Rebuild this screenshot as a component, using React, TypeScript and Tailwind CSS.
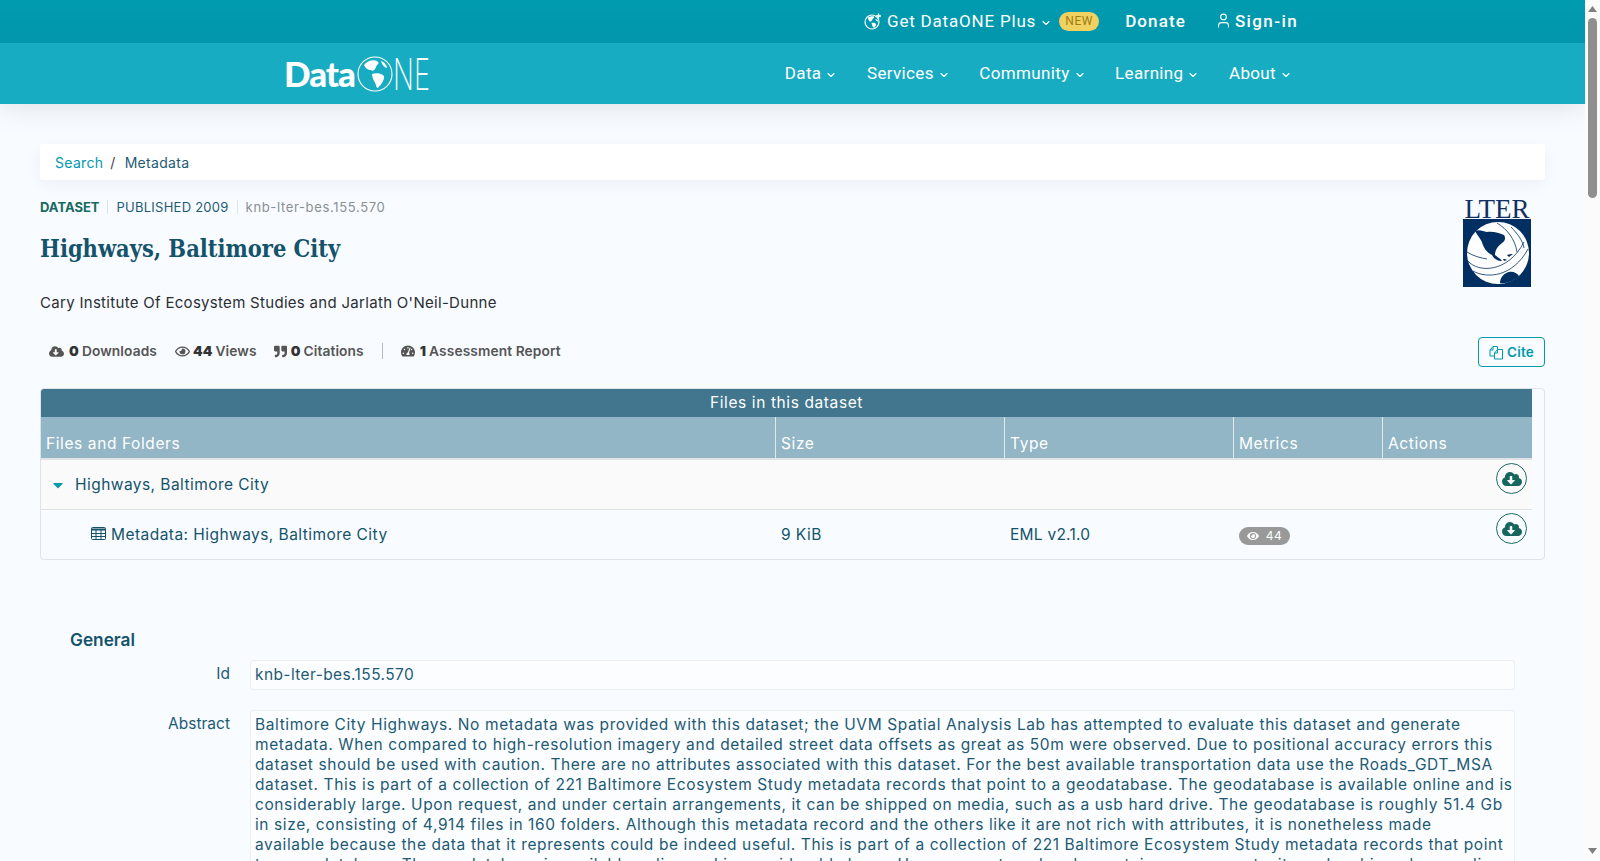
import React from "react";
import { ChevronDown, User } from "lucide-react";
import { FaCloudDownloadAlt, FaRegEye, FaEye, FaQuoteRight, FaTachometerAlt, FaCaretDown } from "react-icons/fa";

const work = "font-['Inter',sans-serif]";
const plex = "font-['Roboto',sans-serif]";

const NavItem = ({ label }: { label: string }) => (
  <span className="flex items-center gap-[4px] text-[17px] tracking-[0.35px] text-white">
    {label}
    <ChevronDown size={12} strokeWidth={2.2} className="mt-[2px]" />
  </span>
);

const abstractLines = [
  "Baltimore City Highways. No metadata was provided with this dataset; the UVM Spatial Analysis Lab has attempted to evaluate this dataset and generate",
  "metadata. When compared to high-resolution imagery and detailed street data offsets as great as 50m were observed. Due to positional accuracy errors this",
  "dataset should be used with caution. There are no attributes associated with this dataset. For the best available transportation data use the Roads_GDT_MSA",
  "dataset. This is part of a collection of 221 Baltimore Ecosystem Study metadata records that point to a geodatabase. The geodatabase is available online and is",
  "considerably large. Upon request, and under certain arrangements, it can be shipped on media, such as a usb hard drive. The geodatabase is roughly 51.4 Gb",
  "in size, consisting of 4,914 files in 160 folders. Although this metadata record and the others like it are not rich with attributes, it is nonetheless made",
  "available because the data that it represents could be indeed useful. This is part of a collection of 221 Baltimore Ecosystem Study metadata records that point",
  "to a geodatabase. The geodatabase is available online and is considerably large. Upon request, and under certain arrangements, it can be shipped on media,",
];

const DownloadBtn = () => (
  <span className="flex h-[31px] w-[31px] items-center justify-center rounded-full border border-[#1a6b66] text-[#16665f]">
    <FaCloudDownloadAlt size={20} />
  </span>
);

const GlobePlus = () => (
  <svg width="18" height="17" viewBox="0 0 18 17" className="mr-[5px]">
    <circle cx="8" cy="9" r="7" fill="none" stroke="white" strokeWidth="1.2" />
    <path d="M4 4.5c2-1 4-1.5 6-1 .5 1-.5 2-1.5 2.5-.3 1.5-1 2.5-2 2.5C5 8.500 4 6.500 4 4.500zM7.500 10c2-.5 3.500 0 4.500 1 .3 1.500-1 3-2 4-1.500-1-2-3-2.500-5zM11.500 6c1 .3 2.500 1 3 2.500-1.500.5-3-1-3-2.500z" fill="white" />
    <path d="M14.500 0.500v5M12 3h5" stroke="white" strokeWidth="1.400" />
  </svg>
);

const CiteIcon = () => (
  <svg width="15" height="15" viewBox="0 0 15 15" fill="none" stroke="#0199ae" strokeWidth="1">
    <path d="M1 5l3-3.500h4.500v3M1 5v6h4.500M1 5h3V1.500" />
    <path d="M5.500 8l3-3.500h5V14h-8zM5.500 8h3V4.500" fill="#f8fbff" />
  </svg>
);

const TableIcon = () => (
  <svg width="15" height="13" viewBox="0 0 15 13" className="mr-[5px] mb-[2px]" fill="none" stroke="#14536b">
    <rect x="0.500" y="0.500" width="14" height="12" rx="1" strokeWidth="1" />
    <path d="M0 2.500h15" strokeWidth="2" />
    <path d="M0.500 6.500h14M0.500 9.500h14M5 3v9M10 3v9" strokeWidth="1" />
  </svg>
);

export default function App() {
  return (
    <div className={`flex h-[861px] overflow-hidden bg-[#f8fbff] ${work}`}>
      <div className="min-w-0 flex-1 overflow-hidden">
        <header className="shadow-[0_0_30px_rgba(0,0,0,0.13)]">
          <div className={`flex h-[43px] items-center justify-end bg-gradient-to-b from-[#019bb0] to-[#0196ab] pr-[287px] text-white ${plex}`}>
            <span className="flex items-center text-[17px] tracking-[0.8px]">
              <GlobePlus />
              Get DataONE Plus
              <ChevronDown size={12} strokeWidth={2.2} className="ml-[4px] mt-[2px]" />
            </span>
            <span className="ml-[7px] h-[19px] w-[40px] rounded-full bg-[#f0d162] text-center text-[12px] leading-[19px] tracking-[0.6px] text-[#9c7d12]">NEW</span>
            <span className="ml-[26px] text-[17px] font-medium tracking-[1.1px]">Donate</span>
            <span className="ml-[29px] flex items-center text-[17px] font-medium tracking-[1.4px]">
              <User size={17} strokeWidth={1.5} className="mr-[3px] mb-[3px]" />
              Sign-in
            </span>
          </div>
          <div className={`flex h-[61px] items-center justify-between bg-[#18acc2] pl-[284px] pr-[293px] ${plex}`}>
            <div className="flex items-center text-white">
              <span className="text-[35px] font-black leading-none tracking-[-1px] font-['Lato',sans-serif]">Data</span>
              <svg width="36" height="36" viewBox="0 0 36 36" className="ml-[2px] shrink-0">
                <circle cx="18" cy="18" r="17" fill="none" stroke="white" strokeWidth="1.100" />
                <path d="M7 9c3-4 9-6 13-4 2 1 2 3 0 4-1 1-1 3-2 4-1 2-3 2-4 1-3 0-6-2-7-5zM15 18c3-1 8-1 11 1 2 2 1 4 0 6-1 3-4 5-5 7-1 0-2-1-2-3-1-3-4-7-4-11z" fill="white" />
                <path d="M24 5c3 1 6 4 6 7-2 0-5-3-6-7z" fill="white" />
              </svg>
              <span className="inline-block w-[36px] origin-left scale-x-[0.62] whitespace-nowrap text-[44px] font-extralight leading-none font-['Inter',sans-serif]">NE</span>
            </div>
            <nav className="flex items-center gap-[29.5px]">
              <NavItem label="Data" />
              <NavItem label="Services" />
              <NavItem label="Community" />
              <NavItem label="Learning" />
              <NavItem label="About" />
            </nav>
          </div>
        </header>

        <main className="px-[40px] pt-[40px]">
          <div className="flex h-[36px] items-center rounded-[3px] bg-white px-[15px] text-[14px] tracking-[0.3px] shadow-[0_4px_16px_rgba(0,0,0,0.05)]">
            <span className="text-[#0199ae]">Search</span>
            <span className="ml-[7px] text-[#444]">/</span>
            <span className="ml-[9px] text-[#1f5b74]">Metadata</span>
          </div>

          <div className="relative">
            <div className="flex items-center pt-[18px] text-[13px] leading-[18px]">
              <span className="font-bold text-[#176a62]">DATASET</span>
              <span className="ml-[7px] mr-[9px] h-[14px] w-px bg-[#dde3e8]" />
              <span className="tracking-[0.25px] text-[#1f5b74]">PUBLISHED 2009</span>
              <span className="mx-[8px] h-[14px] w-px bg-[#dde3e8]" />
              <span className="tracking-[0.65px] text-[#8a8f93]">knb-lter-bes.155.570</span>
            </div>
            <h1 className="mt-[17px] text-[23.4px] font-bold leading-[32px] text-[#14536b] font-['DejaVu_Serif',serif] [font-stretch:condensed]">Highways, Baltimore City</h1>
            <p className="mt-[28px] text-[15px] leading-[20px] tracking-[0.3px] text-[#2b2f33]">Cary Institute Of Ecosystem Studies and Jarlath O'Neil-Dunne</p>
            <div className="absolute right-[14px] top-[19px] flex w-[68px] flex-col items-center">
              <span className="text-[27px] leading-[20px] text-[#12305f] font-['Liberation_Serif',serif]">LTER</span>
              <svg width="68" height="68" viewBox="0 0 68 68">
                <rect width="68" height="68" fill="#022f62" />
                <circle cx="35" cy="34" r="31" fill="white" />
                <path d="M12 12c4-2 8 0 12 1 6-1 12 1 17 3 2 3 1 6-2 8-4 3-7 7-7 12 2 2 5 3 7 6-4 0-8-2-10-6-5-2-9-8-10-13-2-4-5-7-7-11z" fill="#022f62" />
                <path d="M44 36c2-1 4-1 6-1l-4 3zM40 40c2 0 3 0 4 1l-3 1z" fill="#022f62" />
                <path d="M37 64c0-5 4-10 9-11 4-1 8 1 10 4-5 5-12 8-19 7z" fill="#022f62" />
                <path d="M4 33c6 4 14 6 20 7M5 42c10 12 40 12 56-19M10 52c14 8 40 6 55-22M34 4c10 6 18 16 20 29M48 8c6 6 12 14 13 21" stroke="#022f62" strokeWidth="0.800" fill="none" />
              </svg>
            </div>
          </div>

          <div className="mt-[22px] flex h-[32px] items-center justify-between">
            <div className="flex items-center pl-[9px] text-[13.75px] font-semibold tracking-[0.1px] text-[#555]">
              <FaCloudDownloadAlt size={15} className="mr-[5px]" />
              <b className="mr-[3px] text-[#333]">0</b>Downloads
              <FaRegEye size={15} className="ml-[18px] mr-[3px]" />
              <b className="mr-[3px] text-[#333]">44</b>Views
              <FaQuoteRight size={13} className="ml-[17px] mr-[4px]" />
              <b className="mr-[3px] text-[#333]">0</b>Citations
              <span className="mx-[18px] h-[16px] w-px bg-[#bbb]" />
              <FaTachometerAlt size={14} className="mr-[5px]" />
              <b className="mr-[3px] text-[#333]">1</b>Assessment Report
            </div>
            <span className="mt-[2px] flex h-[30px] w-[67px] items-center justify-center gap-[3px] rounded-[4px] border border-[#0199ae] text-[13.5px] font-semibold tracking-[0.2px] text-[#0199ae]">
              <CiteIcon />
              Cite
            </span>
          </div>

          <div className="mt-[21px] overflow-hidden rounded-[4px] border border-[#dfe3e6] pr-[12px] text-[15.5px] tracking-[0.45px]">
            <div className="flex h-[28px] items-center justify-center bg-[#41768e] tracking-[0.6px] text-white">Files in this dataset</div>
            <div className="grid h-[41px] grid-cols-[735px_229px_229px_149px_1fr] bg-[#92b6c5] tracking-[0.6px] text-white">
              {["Files and Folders", "Size", "Type", "Metrics", "Actions"].map((t, i) => (
                <div key={t} className={`flex items-end px-[5px] pb-[4px] leading-[20px] ${i < 4 ? "border-r border-[#dfe8ec]" : ""}`}>{t}</div>
              ))}
            </div>
            <div className="h-[2px] bg-[#dfe3e6]" />
            <div className="flex h-[50px] items-start justify-between border-b border-[#dfe3e6] bg-[#fafafa]">
              <div className="flex h-full items-center pl-[9px] text-[#14536b]">
                <FaCaretDown size={16} className="mr-[9px] text-[#0199ae]" />
                Highways, Baltimore City
              </div>
              <div className="pr-[5px] pt-[3px]"><DownloadBtn /></div>
            </div>
            <div className="grid h-[49px] grid-cols-[735px_229px_229px_149px_1fr] text-[#14536b]">
              <div className="flex items-center pl-[50px]">
                <TableIcon />
                Metadata: Highways, Baltimore City
              </div>
              <div className="flex items-center pl-[5px]">9 KiB</div>
              <div className="flex items-center pl-[5px] tracking-[0.25px]">EML v2.1.0</div>
              <div className="flex items-center pl-[5px] pt-[3px]">
                <span className="flex h-[18px] w-[51px] items-center justify-center gap-[7px] rounded-full bg-[#999] text-[12px] text-white"><FaEye size={12} />44</span>
              </div>
              <div className="flex justify-end pr-[5px] pt-[3px]"><DownloadBtn /></div>
            </div>
          </div>

          <div className="mt-[68px] px-[30px]">
            <h2 className="text-[17.25px] font-semibold leading-[24px] text-[#14536b]">General</h2>
            <div className="mt-[8px] grid grid-cols-[160px_minmax(0,1fr)] gap-x-[20px] gap-y-[20px] text-[15.5px] tracking-[0.6px] text-[#1d5a74]">
              <div className="pt-[4px] text-right leading-[20px] tracking-normal">Id</div>
              <div className="h-[30px] rounded-[3px] border border-[#eceff1] bg-[#fcfdff] px-[4px] py-[4px] leading-[20px] tracking-[0.4px]">knb-lter-bes.155.570</div>
              <div className="pt-[4px] text-right leading-[20px] tracking-normal">Abstract</div>
              <div className="min-w-0 rounded-[3px] border border-[#eceff1] bg-[#fcfdff] px-[4px] py-[4px] leading-[20px]">
                {abstractLines.map((l) => (
                  <div key={l} className="whitespace-nowrap">{l}</div>
                ))}
              </div>
            </div>
          </div>
        </main>
      </div>

      <aside className="flex h-full w-[15px] shrink-0 flex-col items-center bg-[#fbfbfb]">
        <svg width="9" height="6" viewBox="0 0 9 6" className="mt-[6px] shrink-0"><path d="M4.500 0L9 6H0z" fill="#808080" /></svg>
        <div className="mt-[6px] h-[180px] w-[9px] shrink-0 rounded-full bg-[#8f8f8f]" />
        <svg width="9" height="6" viewBox="0 0 9 6" className="mb-[7px] mt-auto shrink-0"><path d="M0 0h9L4.500 6z" fill="#808080" /></svg>
      </aside>
    </div>
  );
}
